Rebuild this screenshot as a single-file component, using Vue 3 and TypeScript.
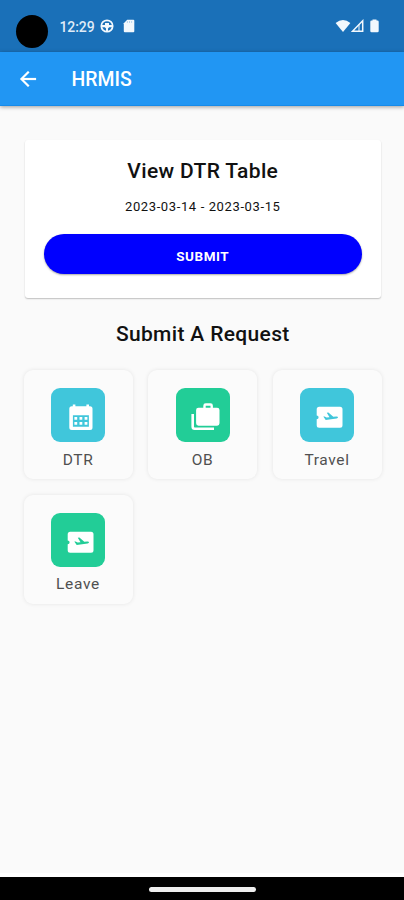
<script setup lang="ts">
type IconName = 'calendar' | 'bags' | 'ticket'

interface RequestItem {
  label: string
  icon: IconName
  tone: 'cyan' | 'green'
}

const range = '2023-03-14 - 2023-03-15'

const requests: RequestItem[] = [
  { label: 'DTR', icon: 'calendar', tone: 'cyan' },
  { label: 'OB', icon: 'bags', tone: 'green' },
  { label: 'Travel', icon: 'ticket', tone: 'cyan' },
  { label: 'Leave', icon: 'ticket', tone: 'green' },
]
</script>

<template>
  <div class="screen">
    <header class="status">
      <span class="camera"></span>
      <span class="clock">12:29</span>
      <svg class="wheel" viewBox="0 0 14 14">
        <circle cx="7" cy="7" r="5.7" fill="none" stroke="currentColor" stroke-width="1.7" />
        <path d="M1.500 6h11v2.200H9.200L8 9.500V13H6V9.500L4.800 8.200H1.500zM5 4h4v2H5z" fill="currentColor" />
      </svg>
      <svg class="sd" viewBox="0 0 12 14">
        <path d="M4.200.8h6.100q1 0 1 1v10.400q0 1-1 1H1.800q-1 0-1-1V4.200z" fill="currentColor" />
        <path d="M4.400 2.200v1.600M6.500 2.200v1.600M8.600 2.200v1.600" stroke="#8bb9df" stroke-width=".7" />
      </svg>
      <span class="spacer"></span>
      <svg class="wifi" viewBox="0 0 16 14">
        <path d="M.6 4.100Q8-2.300 15.400 4.100L8 13z" fill="currentColor" />
      </svg>
      <svg class="signal" viewBox="0 0 13 14">
        <path d="M1.500 12.200H11.700V1.800z" fill="none" stroke="currentColor" stroke-width="1.500" />
        <path d="M8 5.500v6.700" stroke="currentColor" stroke-width="1" />
      </svg>
      <svg class="battery" viewBox="0 0 9 14">
        <path d="M2.500.5h4v1h.9q1.300 0 1.300 1.200v9.300q0 1.200-1.300 1.200H1.600Q.3 13.200.3 12V2.700Q.3 1.500 1.600 1.500h.9z" fill="currentColor" />
      </svg>
    </header>

    <nav class="appbar">
      <svg class="back" viewBox="0 0 24 24">
        <path d="M20 11H7.830l5.590-5.590L12 4l-8 8 8 8 1.410-1.410L7.830 13H20v-2z" fill="currentColor" stroke="currentColor" stroke-width=".2" />
      </svg>
      <span class="brand">HRMIS</span>
    </nav>

    <main class="content">
      <section class="card">
        <h2 class="heading">View DTR Table</h2>
        <p class="range">{{ range }}</p>
        <button class="submit" type="button">SUBMIT</button>
      </section>

      <h2 class="heading requests-title">Submit A Request</h2>

      <div class="grid">
        <div v-for="item in requests" :key="item.label" class="tile">
          <div class="badge" :class="item.tone">
            <svg viewBox="0 0 54 54">
              <template v-if="item.icon === 'calendar'">
                <path d="M20.800 18.300h1v-1.900h2.600v1.900h11v-1.900H38v1.900h1q2.500 0 2.500 2.500v18.700q0 2.500-2.500 2.500H20.800q-2.500 0-2.500-2.500V20.800q0-2.500 2.500-2.500zM21.900 27.300v11.500h16V27.300z" fill="#fff" fill-rule="evenodd" />
                <path d="M23.400 29h2.800v2.800h-2.800zM28.500 29h2.800v2.800h-2.800zM33.600 29h2.800v2.800h-2.800zM23.400 34h2.800v2.800h-2.800zM28.500 34h2.800v2.800h-2.800zM33.600 34h2.800v2.800h-2.800z" fill="#fff" />
              </template>
              <template v-else-if="item.icon === 'bags'">
                <path d="M16.700 26v12.700q0 2 2 2H38" fill="none" stroke="#fff" stroke-width="2.600" />
                <path d="M22.500 19.700h4.800v-2q0-2.400 2.400-2.400h4.800q2.400 0 2.400 2.400v2h4.200q2.400 0 2.400 2.400v13.200q0 2.400-2.400 2.400H22.500q-2.400 0-2.400-2.400V22.100q0-2.400 2.400-2.400zM29.700 17.700v2h4.800v-2z" fill="#fff" fill-rule="evenodd" />
              </template>
              <template v-else>
                <path d="M19.200 18.700H40q2.500 0 2.500 2.500v16q0 2.500-2.500 2.500H19.200q-2.500 0-2.500-2.500v-6a1.900 1.900 0 0 0 0-3.800v-6.200q0-2.500 2.500-2.500z" fill="#fff" />
                <path d="M23.300 28.600l1.300-.2 2 1.200 2.900-.4-2.700-4.500 1.600-.3 4.900 4.400 3.200-.3q1.600 0 1.500 1-.1.700-1.400.9l-10.900 1.600z" :class="`${item.tone}-ink`" />
              </template>
            </svg>
          </div>
          <span class="label">{{ item.label }}</span>
        </div>
      </div>
    </main>

    <footer class="navbar"><span class="handle"></span></footer>
  </div>
</template>

<style>
body {
  margin: 0;
  background: #fafafa;
}
</style>

<style scoped>
.screen {
  display: flex;
  flex-direction: column;
  height: 900px;
  overflow: hidden;
  background: #fafafa;
  font-family: Roboto, "Liberation Sans", sans-serif;
  color: #111;
}
.screen * {
  box-sizing: border-box;
}
.status {
  display: flex;
  flex: none;
  align-items: center;
  height: 51.5px;
  padding: 0 25.5px 0 16px;
  background: #1a70b8;
  color: #f2f8fd;
}
.camera {
  width: 32px;
  height: 33px;
  margin: 11px 11.5px 0 0;
  border-radius: 50%;
  background: #000;
}
.clock {
  width: 40.5px;
  padding-top: 2px;
  font-size: 14px;
  line-height: 20px;
  font-weight: 500;
  letter-spacing: -0.1px;
  color: #dfebf7;
}
.status svg {
  flex: none;
  display: block;
  height: 14px;
}
.wheel { width: 14px; }
.sd { width: 12px; margin-left: 9px; }
.spacer { flex: 1; }
.wifi { width: 16px; }
.signal { width: 13px; }
.battery { width: 9px; margin-left: 6px; }
.appbar {
  display: flex;
  flex: none;
  align-items: center;
  height: 54.5px;
  padding: 2px 0 0 16px;
  background: #2196f3;
  border-bottom: 1px solid #168bea;
  box-shadow: 0 1px 4px rgba(0, 0, 0, 0.38);
  color: #fff;
}
.back {
  width: 24px;
  height: 24px;
  margin-right: 31.5px;
}
.brand {
  padding-top: 2px;
  font-size: 19.4px;
  line-height: 24px;
  font-weight: 500;
}
.content {
  flex: 1;
  padding: 33.5px 22px 0 23.5px;
}
.card {
  display: flex;
  flex-direction: column;
  align-items: center;
  height: 158px;
  margin: 0 1.5px;
  padding: 17px 19px 0;
  border-radius: 3px;
  background: #fff;
  box-shadow: 0 1px 1.5px rgba(0, 0, 0, 0.24);
}
.heading {
  margin: 0;
  font-size: 21px;
  line-height: 28px;
  font-weight: 500;
  letter-spacing: 0.34px;
  text-align: center;
}
.range {
  margin: 13px 0 0;
  font-size: 13px;
  line-height: 18px;
  letter-spacing: 0.62px;
}
.submit {
  flex: none;
  width: 317.5px;
  height: 39.5px;
  margin-top: 18.5px;
  padding: 4px 0 0;
  border: 0;
  border-radius: 20px;
  background: #0000ff;
  box-shadow: 0 1px 2px rgba(0, 0, 0, 0.35);
  color: #fff;
  font: 700 13.5px/18px Roboto, "Liberation Sans", sans-serif;
  letter-spacing: 0.55px;
}
.requests-title {
  margin-top: 22.5px;
}
.grid {
  display: grid;
  grid-template-columns: repeat(3, 109px);
  gap: 15.5px;
  margin-top: 22px;
}
.tile {
  display: flex;
  flex-direction: column;
  align-items: center;
  height: 109px;
  padding-top: 18px;
  border-radius: 9px;
  background: #fbfbfb;
  box-shadow: 0 0 4px rgba(0, 0, 0, 0.09);
}
.badge {
  width: 54px;
  height: 54px;
  border-radius: 9px;
}
.badge svg {
  display: block;
  width: 54px;
  height: 54px;
}
.cyan { background: #40c6db; }
.green { background: #22cd97; }
.cyan-ink { fill: #40c6db; }
.green-ink { fill: #22cd97; }
.label {
  margin-top: 7.5px;
  font-size: 15.5px;
  line-height: 21px;
  letter-spacing: 0.65px;
  color: #505050;
}
.navbar {
  display: flex;
  flex: none;
  justify-content: center;
  align-items: center;
  height: 27px;
  border-top: 4px solid #fff;
  background: #000;
}
.handle {
  width: 107px;
  height: 5px;
  margin-top: 1px;
  border-radius: 3px;
  background: #eee;
}
</style>
